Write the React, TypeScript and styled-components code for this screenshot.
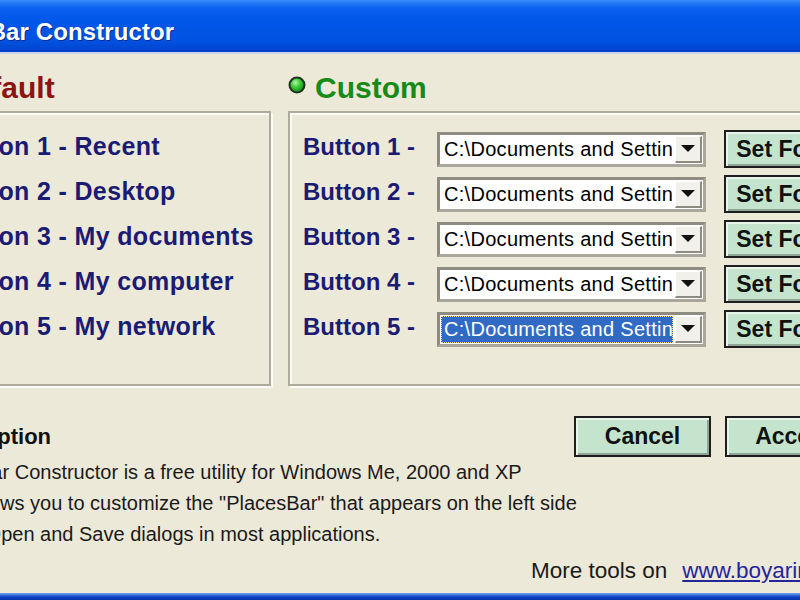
import React from "react";
import styled, { createGlobalStyle } from "styled-components";

const Global = createGlobalStyle`
  html, body {
    margin: 0;
    padding: 0;
    width: 800px;
    height: 600px;
    overflow: hidden;
    background: #ece9d8;
  }
  #root {
    width: 800px;
    height: 600px;
    overflow: hidden;
  }
`;

const Window = styled.div`
  width: 1100px;
  height: 600px;
  margin-left: -100px;
  display: flex;
  flex-direction: column;
  background: #ece9d8;
  font-family: "Liberation Sans", Arial, sans-serif;
`;

const TitleBar = styled.div`
  flex: none;
  height: 54px;
  box-sizing: border-box;
  padding: 11px 0 0 12px;
  display: flex;
  align-items: center;
  background: linear-gradient(
    to bottom,
    #3b8cfb 0px,
    #1f74f6 4px,
    #0a5ff0 9px,
    #0057e8 20px,
    #0053e2 40px,
    #004ad6 47px,
    #003fc6 52px,
    #0a3cb8 54px
  );
  border-bottom: 2px solid #c8d4ea;
`;

const TitleText = styled.span`
  color: #ffffff;
  font-weight: 700;
  font-size: 24px;
  letter-spacing: 0.1px;
  text-shadow: 1px 1px 0 #0b2a8c;
  white-space: nowrap;
`;

const Body = styled.div`
  flex: 1;
  min-height: 0;
  display: flex;
  flex-direction: column;
`;

const Groups = styled.div`
  display: grid;
  grid-template-columns: 337px 700px;
  column-gap: 17px;
  padding-left: 34px;
  margin-top: 16px;
`;

const Column = styled.div`
  display: flex;
  flex-direction: column;
`;

const Heading = styled.div<{ $color: string; $shift?: number }>`
  height: 36px;
  display: flex;
  align-items: center;
  gap: 9px;
  margin-left: ${(p) => p.$shift ?? 0}px;
  color: ${(p) => p.$color};
  font-size: 30px;
  font-weight: 700;
  white-space: nowrap;
`;

const RadioIcon = styled.svg`
  width: 18px;
  height: 18px;
  flex: none;
  margin-top: -6px;
`;

const GroupBox = styled.div<{ $padLeft: number; $padTop: number }>`
  margin-top: 5px;
  height: 275px;
  box-sizing: border-box;
  border: 2px solid #aeab9c;
  box-shadow: 2px 2px 0 #fbfbf6, inset 2px 2px 0 #fbfbf6;
  padding: ${(p) => p.$padTop}px 0 0 ${(p) => p.$padLeft}px;
  display: flex;
  flex-direction: column;
  gap: 7px;
`;

const DefaultItem = styled.div`
  height: 38px;
  display: flex;
  align-items: center;
  color: #1b1b74;
  font-size: 25px;
  font-weight: 700;
  letter-spacing: 0.35px;
  white-space: nowrap;
`;

const Row = styled.div`
  height: 38px;
  display: flex;
  align-items: center;
`;

const RowLabel = styled.div`
  width: 134px;
  flex: none;
  color: #1b1b74;
  font-size: 24px;
  font-weight: 700;
  white-space: nowrap;
  margin-top: -5px;
`;

const Combo = styled.div`
  width: 269px;
  height: 35px;
  flex: none;
  box-sizing: border-box;
  border: 3px solid #a9a79b;
  border-top-color: #8e8c80;
  border-left-color: #8e8c80;
  background: #ffffff;
  display: flex;
  align-items: stretch;
  padding: 1px;
`;

const ComboText = styled.div<{ $selected?: boolean }>`
  flex: 1;
  min-width: 0;
  overflow: hidden;
  white-space: nowrap;
  font-size: 20px;
  letter-spacing: 0.3px;
  line-height: 27px;
  padding-left: 3px;
  color: ${(p) => (p.$selected ? "#ffffff" : "#000000")};
  background: ${(p) => (p.$selected ? "#316ac5" : "transparent")};
  outline: ${(p) => (p.$selected ? "1px dotted #e6dc8a" : "none")};
  outline-offset: -1px;
  margin-right: 2px;
`;

const DropButton = styled.div`
  width: 27px;
  flex: none;
  box-sizing: border-box;
  background: #f1f0ea;
  border-right: 2px solid #8d8b80;
  border-bottom: 2px solid #8d8b80;
  border-top: 1px solid #ffffff;
  border-left: 1px solid #ffffff;
  display: flex;
  align-items: center;
  justify-content: center;
`;

const Arrow = styled.span`
  width: 0;
  height: 0;
  border-left: 7px solid transparent;
  border-right: 7px solid transparent;
  border-top: 7px solid #111111;
`;

const GreenButton = styled.div<{ $h: number }>`
  width: 137px;
  height: ${(p) => p.$h}px;
  flex: none;
  box-sizing: border-box;
  border: 2px solid #1e1e1e;
  background: #c4e4cd;
  box-shadow: inset 2px 2px 0 #e6f4ea, inset -2px -2px 0 #8fa697;
  display: flex;
  align-items: center;
  justify-content: center;
  font-size: 23px;
  font-weight: 700;
  color: #111111;
  white-space: nowrap;
`;

const SetButton = styled(GreenButton)`
  margin-left: 18px;
`;

const Bottom = styled.div`
  display: grid;
  grid-template-columns: 644px auto;
  padding-left: 30px;
  margin-top: 30px;
`;

const DescTitle = styled.div`
  height: 41px;
  line-height: 41px;
  font-size: 22px;
  font-weight: 700;
  color: #111111;
  white-space: nowrap;
`;

const Buttons = styled.div`
  display: flex;
  gap: 14px;
`;

const DescText = styled.div`
  grid-column: 1 / span 2;
  font-size: 20px;
  line-height: 31px;
  color: #1a1a1a;
  white-space: nowrap;
  text-indent: -12px;
`;

const Footer = styled.div`
  grid-column: 1 / span 2;
  margin-top: 6px;
  padding-left: 601px;
  height: 30px;
  display: flex;
  align-items: center;
  gap: 15px;
  font-size: 22.5px;
  color: #1a1a1a;
  white-space: nowrap;
`;

const Link = styled.a`
  color: #25259a;
  text-decoration: underline;
`;

const BottomFrame = styled.div`
  flex: none;
  height: 7px;
  background: linear-gradient(
    to bottom,
    #7aa4ee 0px,
    #3a6fde 2px,
    #0c3fc4 4px,
    #0a33aa 7px
  );
`;

const Radio = () => (
  <RadioIcon viewBox="0 0 18 18">
    <defs>
      <radialGradient id="rg" cx="40%" cy="35%" r="65%">
        <stop offset="0%" stopColor="#b6f7a8" />
        <stop offset="45%" stopColor="#3ccf3a" />
        <stop offset="100%" stopColor="#138a18" />
      </radialGradient>
    </defs>
    <circle cx="9" cy="9" r="7.5" fill="url(#rg)" stroke="#203322" strokeWidth="2" />
  </RadioIcon>
);

const defaults = ["Recent", "Desktop", "My documents", "My computer", "My network"];

export default function App() {
  return (
    <>
      <Global />
      <Window>
        <TitleBar>
          <TitleText>PlacesBar Constructor</TitleText>
        </TitleBar>
        <Body>
          <Groups>
            <Column>
              <Heading $color="#8c1414" $shift={-8}>
                <Radio />
                Default
              </Heading>
              <GroupBox $padLeft={11} $padTop={14}>
                {defaults.map((d, i) => (
                  <DefaultItem key={d}>
                    Button {i + 1} - {d}
                  </DefaultItem>
                ))}
              </GroupBox>
            </Column>
            <Column>
              <Heading $color="#178a17">
                <Radio />
                Custom
              </Heading>
              <GroupBox $padLeft={13} $padTop={17}>
                {[1, 2, 3, 4, 5].map((n) => (
                  <Row key={n}>
                    <RowLabel>Button {n} -</RowLabel>
                    <Combo>
                      <ComboText $selected={n === 5}>C:\Documents and Settings</ComboText>
                      <DropButton>
                        <Arrow />
                      </DropButton>
                    </Combo>
                    <SetButton $h={38}>Set Folder</SetButton>
                  </Row>
                ))}
              </GroupBox>
            </Column>
          </Groups>
          <Bottom>
            <DescTitle>Description</DescTitle>
            <Buttons>
              <GreenButton $h={41}>Cancel</GreenButton>
              <GreenButton $h={41}>Accept</GreenButton>
            </Buttons>
            <DescText>
              PlacesBar Constructor is a free utility for Windows Me, 2000 and XP
              <br />
              and allows you to customize the "PlacesBar" that appears on the left side
              <br />
              of the Open and Save dialogs in most applications.
            </DescText>
            <Footer>
              <span>More tools on</span>
              <Link href="#">www.boyarinov.com</Link>
            </Footer>
          </Bottom>
        </Body>
        <BottomFrame />
      </Window>
    </>
  );
}
